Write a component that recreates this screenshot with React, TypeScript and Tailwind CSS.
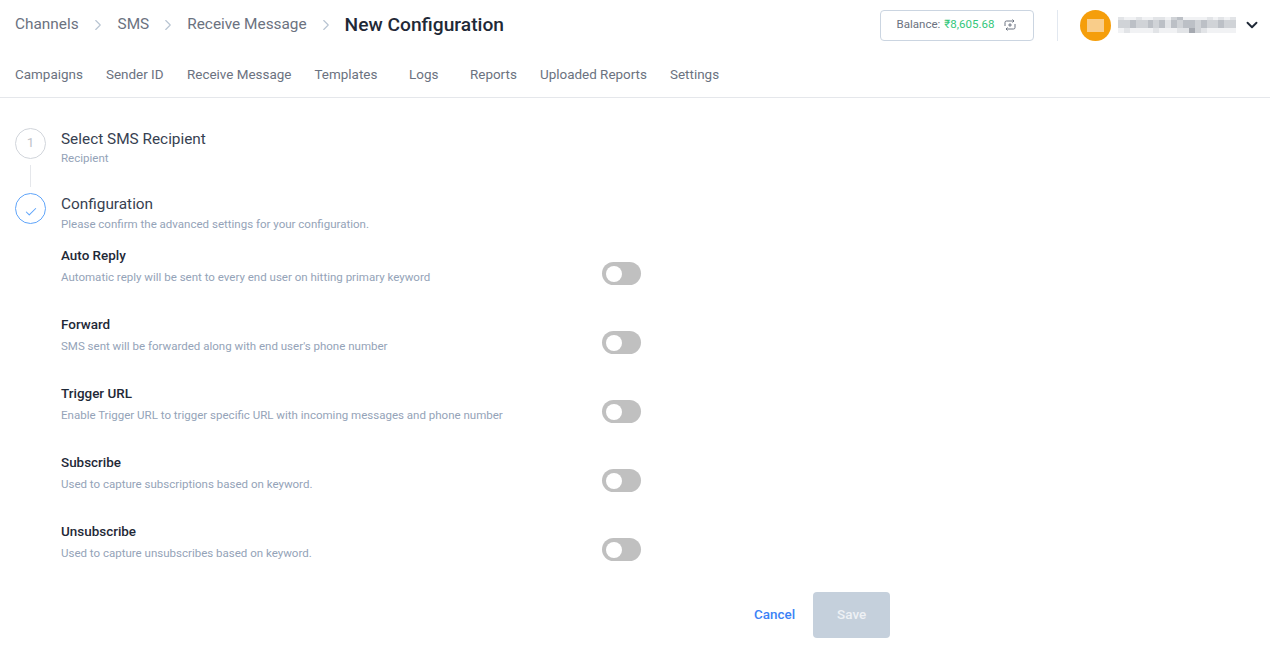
import { ChevronRight, ChevronDown, Check } from "lucide-react";

const TABS = [
  { label: "Campaigns", cls: "w-[91px]" },
  { label: "Sender ID", cls: "w-[81px]" },
  { label: "Receive Message", cls: "w-[127.5px]" },
  { label: "Templates", cls: "w-[94.5px]" },
  { label: "Logs", cls: "w-[61px]" },
  { label: "Reports", cls: "w-[70px]" },
  { label: "Uploaded Reports", cls: "w-[130px]" },
  { label: "Settings", cls: "" },
];

const OPTIONS = [
  { title: "Auto Reply", desc: "Automatic reply will be sent to every end user on hitting primary keyword" },
  { title: "Forward", desc: "SMS sent will be forwarded along with end user's phone number" },
  { title: "Trigger URL", desc: "Enable Trigger URL to trigger specific URL with incoming messages and phone number" },
  { title: "Subscribe", desc: "Used to capture subscriptions based on keyword." },
  { title: "Unsubscribe", desc: "Used to capture unsubscribes based on keyword." },
];

// the user name is pixelated in the picture: columns of top / middle / bottom cells
const A = "bg-[#f1f2f4]";
const B = "bg-[#e2e4e7]";
const C = "bg-[#d0d3d7]";
const D = "bg-[#bcc0c6]";
const E = "bg-[#a5a9b0]";
const BLUR = [
  [B, C, A], [A, C, B], [A, D, A], [B, C, A], [A, C, A], [A, D, A], [B, C, B], [B, D, A],
  [A, B, A], [C, D, A], [D, C, B], [A, D, B], [A, D, E], [A, C, C], [A, D, B], [B, C, A],
  [A, C, A], [B, D, A], [A, C, A], [B, C, A],
];

function Toggle() {
  return (
    <div className="flex h-[23px] w-[39px] items-center rounded-full bg-[#c0c0c0] pl-1">
      <div className="h-4 w-4 rounded-full bg-white" />
    </div>
  );
}

export default function App() {
  return (
    <div className="h-[662px] w-[1270px] overflow-hidden bg-white font-['Roboto',sans-serif]">
      <header className="h-[98px] border-b border-[#e5e7eb] pl-[15px] pr-[9px]">
        <div className="flex h-[50px] items-center">
          <div className="flex items-center text-[15.36px] text-[#6b7280]">
            <span>Channels</span>
            <ChevronRight className="ml-[10px] mr-[11px] h-[18px] w-[18px] text-[#b8c4d2]" strokeWidth={1.5} />
            <span>SMS</span>
            <ChevronRight className="mx-[10px] h-[18px] w-[18px] text-[#b8c4d2]" strokeWidth={1.5} />
            <span>Receive Message</span>
            <ChevronRight className="mx-[10px] h-[18px] w-[18px] text-[#b8c4d2]" strokeWidth={1.5} />
            <span className="text-[19.2px] font-medium text-[#1f2937]">New Configuration</span>
          </div>
          <div className="ml-auto flex items-center">
            <div className="flex h-[31px] w-[154px] items-center justify-center rounded border border-[#cbd5e1] text-[11.52px]">
              <span className="text-[#6b7280]">Balance:</span>
              <span className="ml-1 text-[#34c77b]">₹8,605.68</span>
              <svg className="ml-[9px] h-[14px] w-[14px] text-[#6b7280]" viewBox="0 0 14 14" fill="none" stroke="currentColor" strokeWidth="1">
                <path d="M2 8V4.5A1.5 1.5 0 0 1 3.5 3H11M9.5 1.5 11 3 9.5 4.5M12 6v3.5A1.5 1.5 0 0 1 10.500 11H3M4.500 9.500 3 11l1.500 1.500M7 5.200v3.600M5.200 7h3.600" />
              </svg>
            </div>
            <div className="ml-[23px] mr-[22px] h-[31px] w-px bg-[#e2e8f0]" />
            <div className="flex h-[31px] w-[31px] items-center justify-center rounded-full bg-[#f59e0b]">
              <div className="h-[13px] w-[17px] bg-[#f9cd8a]" />
            </div>
            <div className="ml-[7px] flex h-[16px] w-[118px] overflow-hidden">
              {BLUR.map((col, i) => (
                <div key={i} className="flex h-full flex-1 flex-col">
                  <div className={`h-[3px] ${col[0]}`} />
                  <div className={`h-[8px] ${col[1]}`} />
                  <div className={`h-[5px] ${col[2]}`} />
                </div>
              ))}
            </div>
            <ChevronDown className="ml-[7px] h-[18px] w-[18px] text-[#1f2937]" strokeWidth={2.5} />
          </div>
        </div>
        <nav className="flex h-[47px] items-center pt-[3px] text-[13.44px] text-[#6b7280]">
          {TABS.map((tab) => (
            <span key={tab.label} className={tab.cls}>
              {tab.label}
            </span>
          ))}
        </nav>
      </header>

      <main className="px-[15px] pt-[30px]">
        <div className="flex gap-[15px]">
          <div className="flex w-[31px] flex-col items-center">
            <div className="flex h-[31px] w-[31px] items-center justify-center rounded-full border border-[#d1d5db] text-[13.44px] text-[#c0c4ca]">
              1
            </div>
            <div className="mt-[6px] h-[22px] w-px bg-[#e5e7eb]" />
          </div>
          <div>
            <h3 className="mt-px text-[15.36px] leading-5 text-[#374151]">Select SMS Recipient</h3>
            <p className="mt-px text-[11.52px] leading-4 text-[#94a3b8]">Recipient</p>
          </div>
        </div>

        <div className="mt-[6px] flex gap-[15px]">
          <div className="flex h-[31px] w-[31px] items-center justify-center rounded-full border border-[#60a5fa] text-[#60a5fa]">
            <Check className="mt-[7px] h-[14px] w-[14px]" strokeWidth={1.8} />
          </div>
          <div>
            <h3 className="mt-px text-[15.36px] leading-5 text-[#374151]">Configuration</h3>
            <p className="mt-[2px] text-[11.52px] leading-4 text-[#94a3b8]">Please confirm the advanced settings for your configuration.</p>
          </div>
        </div>

        <div className="ml-[46px] mt-[10px]">
          {OPTIONS.map((opt) => (
            <div key={opt.title} className="flex h-[69px] w-[580px] items-start justify-between">
              <div>
                <div className="mt-[4px] text-[13.44px] font-medium leading-5 text-[#1f2937]">{opt.title}</div>
                <div className="mt-[3px] text-[11.52px] leading-4 text-[#94a3b8]">{opt.desc}</div>
              </div>
              <div className="mt-[20px]">
                <Toggle />
              </div>
            </div>
          ))}
        </div>

        <div className="ml-[739px] mt-[5px] flex items-center gap-[18px]">
          <button className="text-[13.44px] font-medium text-[#3b82f6]">Cancel</button>
          <button className="h-[46px] w-[77px] rounded bg-[#c5d0dc] text-[13.44px] font-medium text-[#eef1f5]">Save</button>
        </div>
      </main>
    </div>
  );
}
